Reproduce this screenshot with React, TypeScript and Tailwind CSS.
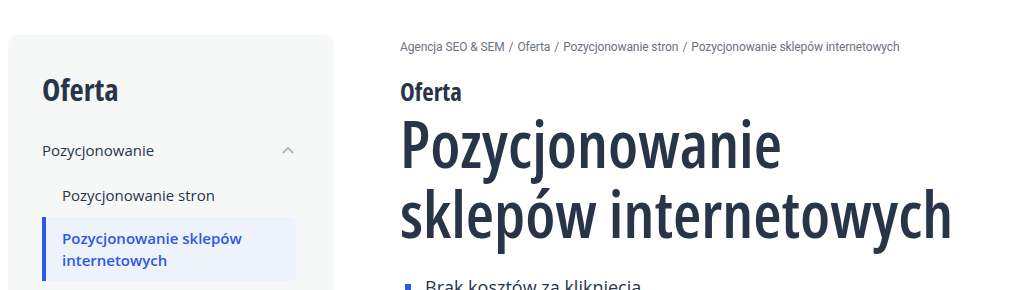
import React from "react";

const head = { fontFamily: '"Open Sans", "Noto Sans", sans-serif' };
const body = { fontFamily: 'Roboto, "Liberation Sans", sans-serif' };

export default function App() {
  return (
    <div className="w-[1018px] h-[290px] overflow-hidden bg-white flex pl-2 pt-[35px] text-[#283549]">
      <aside className="w-[326px] h-[300px] shrink-0 bg-[#f6f7f7] rounded-[10px] px-[34px] pt-[37px] font-stretch-[90%]" style={head}>
        <h2 className="text-[31px] leading-[34px] font-bold font-stretch-[87.5%]">Oferta</h2>
        <div className="mt-[32px] flex items-center justify-between h-[24px] pr-[6px]">
          <span className="text-[15px]">Pozycjonowanie</span>
          <svg width="12" height="8" viewBox="0 0 12 8" fill="none" stroke="#a8adb5" strokeWidth="1.6">
            <path d="M1 7l5-5 5 5" />
          </svg>
        </div>
        <div className="mt-[21px] pl-[20px] text-[15px] font-medium leading-[24px]">Pozycjonowanie stron</div>
        <div className="mt-[10px] w-[254px] bg-[#eef2fa] border-l-4 border-[#2b59e8] rounded-r-[6px] pl-[16px] py-[10px] text-[15px] font-semibold leading-[22px] text-[#2b59e8]">
          Pozycjonowanie sklepów
          <br />
          internetowych
        </div>
      </aside>
      <main className="ml-[66px] pt-[4px]">
        <div className="text-[12px] leading-[16px] text-[#6b7280] flex gap-[4px] tracking-[-0.1px]" style={body}>
          <span>Agencja SEO &amp; SEM</span>
          <span>/</span>
          <span>Oferta</span>
          <span>/</span>
          <span>Pozycjonowanie stron</span>
          <span>/</span>
          <span>Pozycjonowanie sklepów internetowych</span>
        </div>
        <div style={head}>
          <div className="mt-[22px] text-[25px] font-bold leading-[28px] font-stretch-condensed">Oferta</div>
          <h1 className="mt-[3px] text-[65px] font-semibold leading-[70px] font-stretch-condensed">
            Pozycjonowanie
            <br />
            sklepów internetowych
          </h1>
          <ul className="mt-[27px]">
            <li className="flex items-center gap-[14px] text-[18px] leading-[24px] font-stretch-[90%]">
              <span className="w-[6px] h-[6px] ml-[5px] bg-[#2b59e8]" />
              Brak kosztów za kliknięcia
            </li>
          </ul>
        </div>
      </main>
    </div>
  );
}
